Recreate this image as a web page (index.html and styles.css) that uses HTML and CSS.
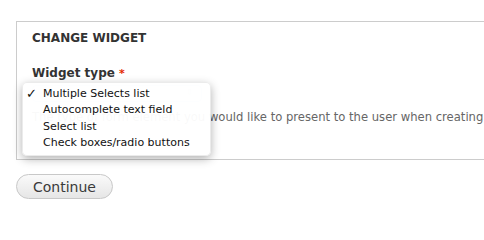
FILE: index.html
```html
<!DOCTYPE html>
<html>
<head>
<meta charset="utf-8">
<link rel="stylesheet" href="styles.css">
</head>
<body>
<div class="page">
  <fieldset class="panel">
    <h2 class="panel-title">CHANGE WIDGET</h2>
    <div class="field">
      <label class="field-label">Widget type <span class="req">*</span></label>
      <div class="select"><span class="select-arrow">⇕</span></div>
      <div class="description">The type of form element you would like to present to the user when creating this field in the Article type.</div>
    </div>
  </fieldset>
  <button class="btn">Continue</button>
  <ul class="menu">
    <li class="menu-item checked"><span class="check">✓</span>Multiple Selects list</li>
    <li class="menu-item">Autocomplete text field</li>
    <li class="menu-item">Select list</li>
    <li class="menu-item">Check boxes/radio buttons</li>
  </ul>
</div>
</body>
</html>
```
FILE: styles.css
```css
html, body {
  margin: 0;
  padding: 0;
  background: #fff;
  overflow: hidden;
}
body {
  font-family: "DejaVu Sans", Verdana, sans-serif;
  color: #333;
}
.page {
  position: relative;
  width: 484px;
  height: 220px;
  overflow: hidden;
  padding: 21px 0 0 16px;
  box-sizing: border-box;
}
.panel {
  margin: 0;
  width: 700px;
  height: 139px;
  box-sizing: border-box;
  border: 1px solid #ccc;
  padding: 8px 15px 0 15px;
  min-width: 0;
}
.panel-title {
  margin: 0;
  font-size: 12px;
  font-weight: bold;
  line-height: 16px;
  color: #333;
}
.field {
  margin-top: 19px;
}
.field-label {
  display: block;
  font-size: 12px;
  font-weight: bold;
  line-height: 16px;
  color: #333;
}
.req {
  color: #e32700;
  font-size: 11px;
}
.select {
  margin-top: 3px;
  width: 168px;
  height: 15px;
  border: 1px solid #c6d6ea;
  border-radius: 4px;
  background: #f2f6fb;
  position: relative;
}
.select-arrow {
  position: absolute;
  right: 8px;
  top: 1px;
  font-size: 9px;
  color: #d8d8d8;
}
.description {
  margin-top: 7px;
  font-size: 11.6px;
  line-height: 16px;
  color: #666;
  white-space: nowrap;
}
.btn {
  margin-top: 14px;
  width: 97px;
  height: 25px;
  border: 1px solid #c8c8c8;
  border-radius: 13px;
  background: linear-gradient(#fafafa, #e6e6e6);
  font-family: "DejaVu Sans", Verdana, sans-serif;
  font-size: 14px;
  color: #3a3a3a;
  padding: 0;
  display: block;
}
.menu {
  position: absolute;
  left: 22px;
  top: 82px;
  width: 189px;
  height: 74px;
  box-sizing: border-box;
  margin: 0;
  padding: 3px 0 0 0;
  list-style: none;
  background: rgba(255,255,255,0.96);
  border: 1px solid rgba(0,0,0,0.08);
  border-radius: 5px;
  box-shadow: 0 3px 10px rgba(0,0,0,0.3);
}
.menu-item {
  position: relative;
  padding-left: 20px;
  font-size: 11px;
  line-height: 16.3px;
  color: #111;
  white-space: nowrap;
}
.check {
  position: absolute;
  left: 3px;
  top: 0;
  font-size: 13px;
  font-weight: bold;
  color: #111;
}
```
